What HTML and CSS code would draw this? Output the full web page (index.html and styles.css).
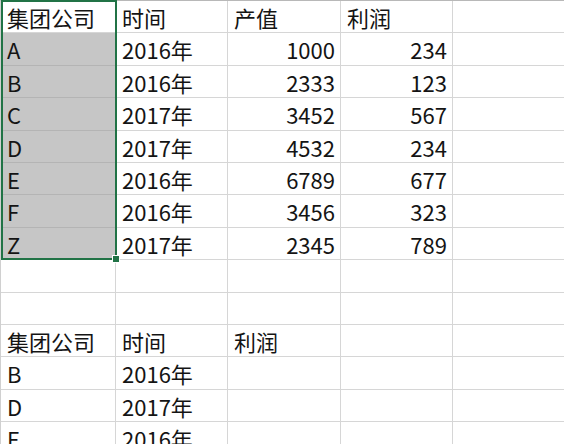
FILE: index.html
```html
<!DOCTYPE html>
<html lang="zh">
<head>
<meta charset="utf-8">
<link rel="stylesheet" href="styles.css">
</head>
<body>
<div class="wrap">
  <div class="sheet">
    <div class="c">集团公司</div><div class="c">时间</div><div class="c">产值</div><div class="c">利润</div><div class="c"></div>
    <div class="c sel">A</div><div class="c">2016年</div><div class="c n">1000</div><div class="c n">234</div><div class="c"></div>
    <div class="c sel">B</div><div class="c">2016年</div><div class="c n">2333</div><div class="c n">123</div><div class="c"></div>
    <div class="c sel">C</div><div class="c">2017年</div><div class="c n">3452</div><div class="c n">567</div><div class="c"></div>
    <div class="c sel">D</div><div class="c">2017年</div><div class="c n">4532</div><div class="c n">234</div><div class="c"></div>
    <div class="c sel">E</div><div class="c">2016年</div><div class="c n">6789</div><div class="c n">677</div><div class="c"></div>
    <div class="c sel">F</div><div class="c">2016年</div><div class="c n">3456</div><div class="c n">323</div><div class="c"></div>
    <div class="c sel">Z</div><div class="c">2017年</div><div class="c n">2345</div><div class="c n">789</div><div class="c"></div>
    <div class="c"></div><div class="c"></div><div class="c"></div><div class="c"></div><div class="c"></div>
    <div class="c"></div><div class="c"></div><div class="c"></div><div class="c"></div><div class="c"></div>
    <div class="c">集团公司</div><div class="c">时间</div><div class="c">利润</div><div class="c"></div><div class="c"></div>
    <div class="c">B</div><div class="c">2016年</div><div class="c"></div><div class="c"></div><div class="c"></div>
    <div class="c">D</div><div class="c">2017年</div><div class="c"></div><div class="c"></div><div class="c"></div>
    <div class="c">E</div><div class="c">2016年</div><div class="c"></div><div class="c"></div><div class="c"></div>
  </div>
  <div class="selection"></div>
  <div class="handle"></div>
</div>
</body>
</html>
```
FILE: styles.css
```css
html, body {
  margin: 0;
  padding: 0;
  background: #ffffff;
  overflow: hidden;
}
.wrap {
  position: relative;
  width: 564px;
  height: 444px;
  overflow: hidden;
}
.sheet {
  display: grid;
  grid-template-columns: 115px 112px 113px 112px 120px;
  grid-auto-rows: 32.4px;
  border-top: 1px solid #b8b8b8;
  border-left: 1px solid #d0d0d0;
  font-family: "Noto Sans CJK SC", "Noto Sans", sans-serif;
  font-size: 22px;
  color: #141414;
}
.c {
  box-sizing: border-box;
  border-right: 1px solid #d6d6d6;
  border-bottom: 1px solid #d6d6d6;
  padding: 0 5px 0 6px;
  line-height: 32px;
  white-space: nowrap;
  overflow: hidden;
}
.n {
  text-align: right;
}
.sel {
  background: #c6c6c6;
  border-bottom-color: #b4b4b4;
}
.selection {
  position: absolute;
  left: 1px;
  top: 0;
  width: 116px;
  height: 260px;
  box-sizing: border-box;
  border: 2px solid #217346;
}
.handle {
  position: absolute;
  left: 113px;
  top: 256px;
  width: 6px;
  height: 6px;
  background: #217346;
  outline: 1px solid #ffffff;
}
```
